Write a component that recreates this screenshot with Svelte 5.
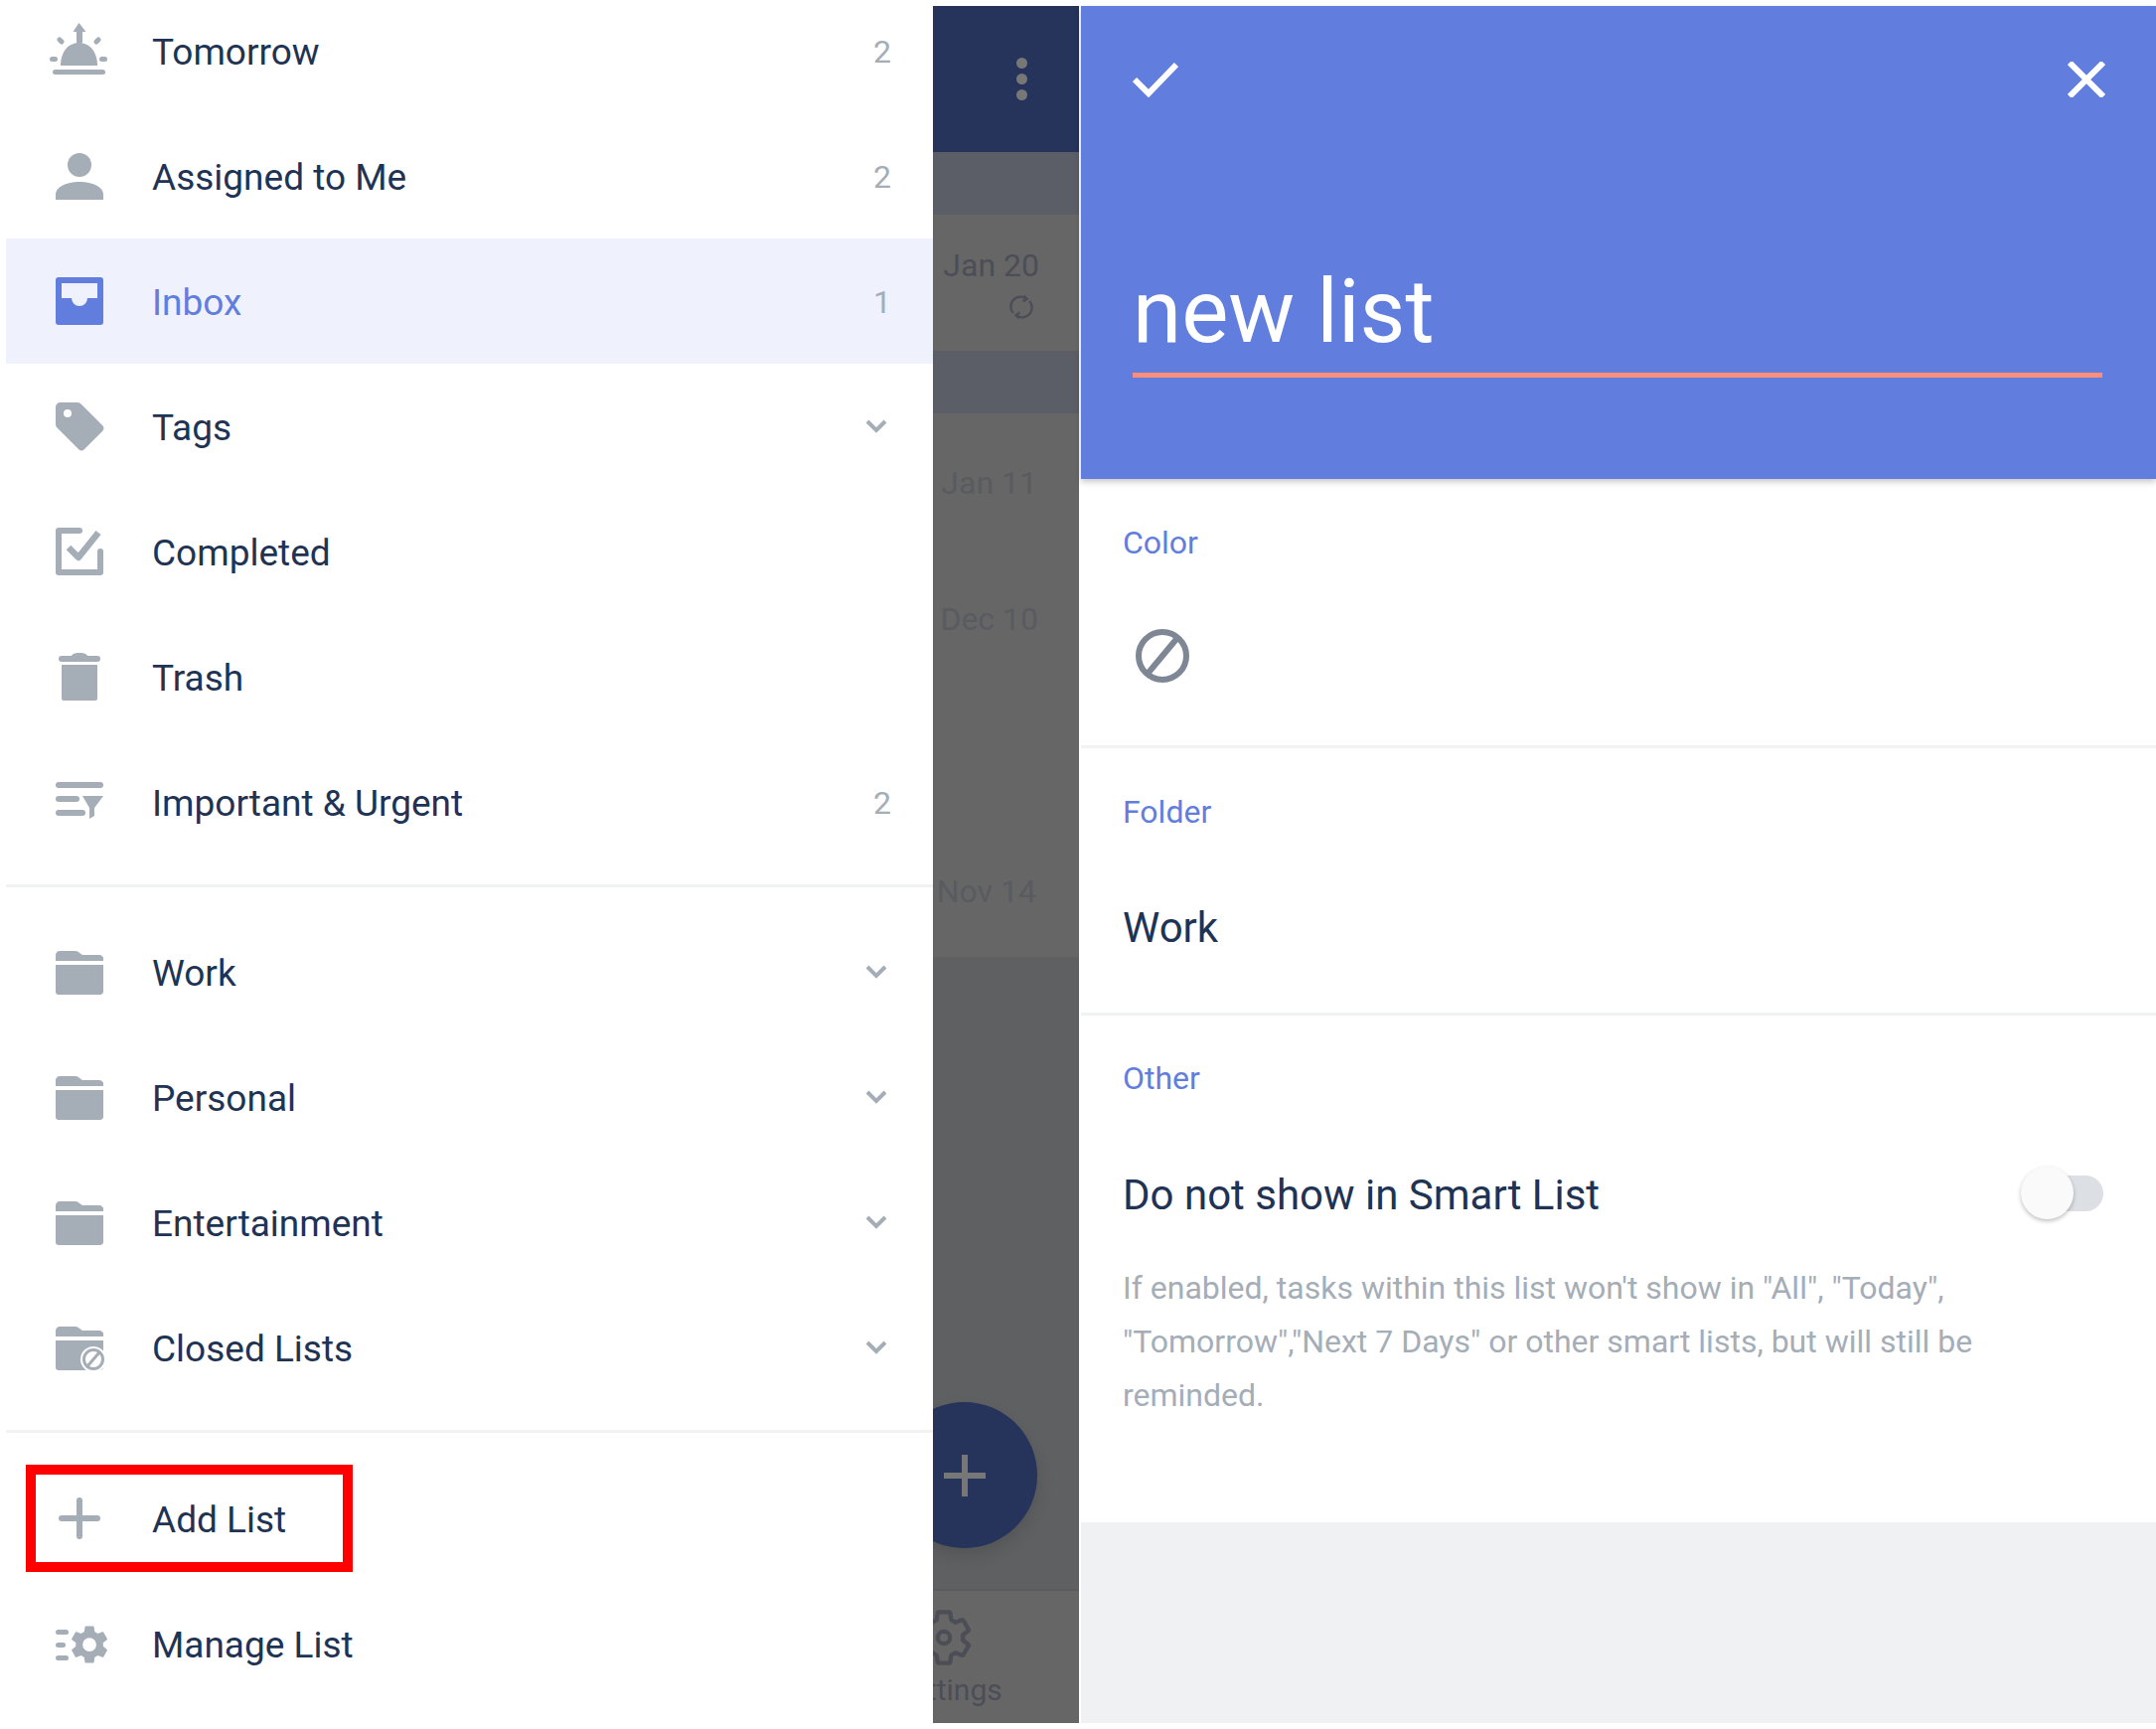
<script>
    const topItems = [
        { label: "Tomorrow", icon: "sun", count: 2 },
        { label: "Assigned to Me", icon: "person", count: 2 },
        { label: "Inbox", icon: "inbox", count: 1, active: true },
        { label: "Tags", icon: "tag", chevron: true },
        { label: "Completed", icon: "done" },
        { label: "Trash", icon: "trash" },
        { label: "Important & Urgent", icon: "filter", count: 2 },
    ];
    const folders = [
        { label: "Work", icon: "folder", chevron: true },
        { label: "Personal", icon: "folder", chevron: true },
        { label: "Entertainment", icon: "folder", chevron: true },
        { label: "Closed Lists", icon: "closed", chevron: true },
    ];
    const dates = [
        { text: "Jan 11", top: 50, right: 42 },
        { text: "Dec 10", top: 97, right: 41 },
        { text: "Nov 14", top: 234, right: 43 },
    ];
    const gear = "M19.14 12.94c.04-.3.06-.61.06-.94 0-.32-.02-.64-.07-.94l2.03-1.58c.18-.14.23-.41.12-.61l-1.92-3.32c-.12-.22-.37-.29-.59-.22l-2.39.96c-.5-.38-1.03-.7-1.62-.94l-.36-2.54c-.04-.24-.24-.41-.48-.41h-3.84c-.24 0-.43.17-.47.41l-.36 2.54c-.59.24-1.13.57-1.62.94l-2.39-.96c-.22-.08-.47 0-.59.22L2.74 8.87c-.12.21-.08.47.12.61l2.03 1.58c-.05.3-.09.63-.09.94s.02.64.07.94l-2.03 1.58c-.18.14-.23.41-.12.61l1.92 3.32c.12.22.37.29.59.22l2.39-.96c.5.38 1.03.7 1.62.94l.36 2.54c.05.24.24.41.48.41h3.84c.24 0 .44-.17.47-.41l.36-2.54c.59-.24 1.13-.56 1.62-.94l2.39.96c.22.08.47 0 .59-.22l1.92-3.32c.12-.22.07-.47-.12-.61l-2.01-1.58z";
</script>

{#snippet icon(name)}
    <svg class="icon" viewBox="0 0 48 48" width="48" height="48">
        {#if name === "sun"}
            <path d="M23.500-4l7 9h-3.500v11h-6V5h-3.500z" />
            <path d="M5 39c0-14 8-23 18.500-23S42 25 42 39z" />
            <rect x="-3" y="43" width="53" height="5" rx="2.500" />
            <rect x="-6" y="30" width="8" height="5" rx="2.500" />
            <rect x="44" y="30" width="8" height="5" rx="2.500" />
            <rect x="1" y="11.500" width="8" height="5" rx="2.500" transform="rotate(45 5 14)" />
            <rect x="38" y="11.500" width="8" height="5" rx="2.500" transform="rotate(-45 42 14)" />
        {:else if name === "person"}
            <circle cx="24" cy="13" r="12" />
            <path d="M0 48v-5c0-8 11-13 24-13s24 5 24 13v5z" />
        {:else if name === "inbox"}
            <path fill="#617ede" fill-rule="evenodd" d="M3 0h42a3 3 0 0 1 3 3v42a3 3 0 0 1-3 3H3a3 3 0 0 1-3-3V3a3 3 0 0 1 3-3zM6 6v15h10a8 8 0 0 0 16 0h10V6z" />
        {:else if name === "tag"}
            <path fill-rule="evenodd" d="M5 0h17c2 0 3 1 4 2l21 21c2 2 2 4 0 6L29 47c-2 2-4 2-6 0L2 26c-1-1-2-2-2-4V5c0-3 2-5 5-5zm7 7a4 4 0 1 0 0 8 4 4 0 0 0 0-8z" />
        {:else if name === "done"}
            <path d="M24 3H3v42h42V24" class="line" stroke-width="6" stroke-linecap="round" stroke-linejoin="round" />
            <path d="M13 20l10 10L43 5" class="line" stroke-width="6.500" stroke-linejoin="round" />
        {:else if name === "trash"}
            <rect x="3" y="3" width="42" height="6" rx="3" />
            <path d="M16 3c1-2 3-3 8-3s7 1 8 3z" />
            <path d="M6 12h36v34a2 2 0 0 1-2 2H8a2 2 0 0 1-2-2z" />
        {:else if name === "filter"}
            <rect x="0" y="4" width="48" height="6" rx="3" />
            <rect x="0" y="18" width="24" height="6" rx="3" />
            <rect x="0" y="32" width="30" height="6" rx="3" />
            <path d="M27 18h21l-9 12v8l-5 3V30z" />
        {:else if name === "folder"}
            <path d="M4 3h16c2 0 3 1 4 2l3 2h17c2 0 4 2 4 3v3H0V7c0-2 2-4 4-4z" />
            <path d="M0 17h48v27c0 2-2 3-3 3H3c-2 0-3-1-3-3z" />
        {:else if name === "closed"}
            <path d="M4 3h16c2 0 3 1 4 2l3 2h17c2 0 4 2 4 3v3H0V7c0-2 2-4 4-4z" />
            <path d="M0 17h48v27c0 2-2 3-3 3H3c-2 0-3-1-3-3z" />
            <circle cx="38" cy="36" r="13" fill="#fff" />
            <circle cx="38" cy="36" r="9.500" class="line" stroke-width="3" />
            <path d="M32 43l12-14" class="line" stroke-width="3" />
        {:else if name === "plus"}
            <rect x="21" y="3" width="6" height="42" rx="3" />
            <rect x="3" y="21" width="42" height="6" rx="3" />
        {:else if name === "gear"}
            <rect x="0" y="10" width="13" height="5" rx="2.500" />
            <rect x="0" y="23" width="10" height="5" rx="2.500" />
            <rect x="0" y="36" width="13" height="5" rx="2.500" />
            <path fill-rule="evenodd" transform="translate(11 2) scale(1.92)" d="{gear}M12 15.600a3.600 3.600 0 1 1 0-7.200 3.600 3.600 0 0 1 0 7.200z" />
        {/if}
    </svg>
{/snippet}

{#snippet row(item)}
    <div class="row" class:active={item.active}>
        {@render icon(item.icon)}
        <span class="label">{item.label}</span>
        {#if item.count}
            <span class="count">{item.count}</span>
        {/if}
        {#if item.chevron}
            <svg class="chevron" viewBox="0 0 22 14" width="22" height="14">
                <path d="M2 2l9 9 9-9" />
            </svg>
        {/if}
    </div>
{/snippet}

<div class="page">
    <aside class="drawer">
        <div class="group first">
            {#each topItems as item}
                {@render row(item)}
            {/each}
        </div>
        <div class="sep"></div>
        <div class="group">
            {#each folders as item}
                {@render row(item)}
            {/each}
        </div>
        <div class="sep second"></div>
        <div class="group">
            <div class="add-box"></div>
            {@render row({ label: "Add List", icon: "plus" })}
            {@render row({ label: "Manage List", icon: "gear" })}
        </div>
    </aside>

    <div class="behind">
        <div class="behind-head">
            <span class="dot"></span><span class="dot"></span><span class="dot"></span>
        </div>
        <div class="bar"></div>
        <div class="task">
            <span class="date">Jan 20</span>
            <svg class="sync" viewBox="0 0 24 24" width="26" height="26">
                <path d="M4.500 17.500A9 9 0 0 1 16.500 4.200M19.500 6.500A9 9 0 0 1 7.500 19.800" />
                <path d="M14 1.500l3 3-3.500 2.500M10 22.500l-3-3 3.500-2.500" />
            </svg>
        </div>
        <div class="bar"></div>
        <div class="tasks">
            {#each dates as d}
                <span class="date faded" style="margin-top: {d.top}px; margin-right: {d.right}px">{d.text}</span>
            {/each}
        </div>
        <div class="empty">
            <div class="fab">
                <svg viewBox="0 0 42 42" width="42" height="42">
                    <path d="M21 0v42M0 21h42" />
                </svg>
            </div>
        </div>
        <div class="nav">
            <svg class="nav-gear" viewBox="0 0 24 24" width="64" height="64">
                <path d={gear} />
                <circle cx="12" cy="12" r="2.300" />
            </svg>
            <span class="nav-label">Settings</span>
        </div>
    </div>

    <main class="editor">
        <header class="editor-head">
            <div class="head-icons">
                <svg viewBox="0 0 46 36" width="46" height="36">
                    <path d="M2 18l14 14L44 3" />
                </svg>
                <svg viewBox="0 0 38 36" width="38" height="36">
                    <path d="M2 1l34 34M36 1L2 35" />
                </svg>
            </div>
            <div class="title">new list</div>
        </header>

        <section class="color-section">
            <h4>Color</h4>
            <svg class="ban" viewBox="0 0 54 54" width="54" height="54">
                <circle cx="27" cy="27" r="24" />
                <path d="M12 45L42 9" />
            </svg>
        </section>

        <section class="folder-section">
            <h4>Folder</h4>
            <div class="value">Work</div>
        </section>

        <section class="other-section">
            <h4>Other</h4>
            <div class="switch-row">
                <div class="value">Do not show in Smart List</div>
                <div class="toggle"><span class="knob"></span></div>
            </div>
            <p class="hint">If enabled, tasks within this list won't show in "All", "Today", "Tomorrow","Next 7 Days" or other smart lists, but will still be reminded.</p>
        </section>

        <div class="editor-foot"></div>
    </main>
</div>

<style>
    :global(body) {
        margin: 0;
        background: #fff;
    }

    .page {
        display: flex;
        width: 2170px;
        height: 1740px;
        box-sizing: border-box;
        padding: 6px 0 6px 6px;
        overflow: hidden;
        font-family: Roboto, "Liberation Sans", sans-serif;
        color: #1f3354;
    }

    .drawer {
        position: relative;
        width: 933px;
        flex: none;
        z-index: 2;
        background: #fff;
    }

    .group {
        position: relative;
    }

    .group.first {
        margin-top: -18px;
    }

    .row {
        display: flex;
        align-items: center;
        height: 126px;
        padding-left: 50px;
        padding-right: 42px;
    }

    .row.active {
        background: #eff1fc;
    }

    .row.active .label {
        color: #617ede;
    }

    .icon {
        flex: none;
        fill: #a5adb7;
        overflow: visible;
    }

    .icon .line {
        fill: none;
        stroke: #a5adb7;
    }

    .label {
        margin-left: 49px;
        padding-top: 3px;
        font-size: 37px;
        flex: 1;
    }

    .count {
        padding-top: 1px;
        font-size: 32px;
        color: #a5adb7;
    }

    .chevron {
        margin-right: 4px;
    }

    .chevron path {
        fill: none;
        stroke: #a5adb7;
        stroke-width: 4;
    }

    .sep {
        height: 3px;
        margin: 20px 0 22px;
        background: #f1f2f3;
    }

    .sep.second {
        margin: 20px 0 23px;
    }

    .add-box {
        position: absolute;
        left: 20px;
        top: 9px;
        width: 329px;
        height: 108px;
        box-sizing: border-box;
        border: 10px solid #ff0000;
    }

    .behind {
        width: 147px;
        flex: none;
        display: flex;
        flex-direction: column;
        overflow: hidden;
        background: #666;
    }

    .behind-head {
        height: 147px;
        flex: none;
        box-sizing: border-box;
        background: #26335a;
        display: flex;
        flex-direction: column;
        align-items: flex-end;
        padding: 52px 52px 0 0;
        gap: 5px;
    }

    .dot {
        width: 11px;
        height: 11px;
        border-radius: 50%;
        background: #777;
    }

    .bar {
        height: 63px;
        flex: none;
        background: #5b5e67;
    }

    .task {
        height: 137px;
        flex: none;
        display: flex;
        flex-direction: column;
        align-items: flex-end;
        padding-right: 40px;
        padding-top: 31px;
        box-sizing: border-box;
    }

    .date {
        font-size: 32px;
        line-height: 40px;
        color: #4b4e57;
    }

    .date.faded {
        color: #595b61;
    }

    .sync {
        margin: 9px 5px 0 0;
    }

    .sync path {
        fill: none;
        stroke: #4b4e57;
        stroke-width: 2.200;
    }

    .tasks {
        height: 547px;
        flex: none;
        display: flex;
        flex-direction: column;
        align-items: flex-end;
    }

    .empty {
        position: relative;
        height: 636px;
        flex: none;
        background: #5f6062;
    }

    .fab {
        position: absolute;
        left: -42px;
        top: 448px;
        width: 147px;
        height: 147px;
        border-radius: 50%;
        background: #26335a;
        box-shadow: 0 8px 16px rgba(0, 0, 0, 0.12);
        display: flex;
        align-items: center;
        justify-content: center;
    }

    .fab path {
        fill: none;
        stroke: #777;
        stroke-width: 6;
    }

    .nav {
        flex: 1;
        border-top: 2px solid #5a5b5d;
        display: flex;
        flex-direction: column;
        align-items: center;
        margin-left: -43px;
        width: calc(100% + 43px);
        padding-right: 74px;
        box-sizing: border-box;
    }

    .nav-gear {
        margin: 15px 8px 0 0;
        flex: none;
    }

    .nav-gear path,
    .nav-gear circle {
        fill: none;
        stroke: #4b4e57;
        stroke-width: 1.600;
        stroke-linejoin: round;
    }

    .nav-label {
        margin-top: 3px;
        font-size: 30px;
        line-height: 36px;
        color: #4b4e57;
    }

    .editor {
        flex: 1;
        margin-left: 2px;
        display: flex;
        flex-direction: column;
        background: #fff;
    }

    .editor-head {
        position: relative;
        height: 476px;
        flex: none;
        box-sizing: border-box;
        background: #617ede;
        padding: 56px 54px 0 52px;
        box-shadow: 0 3px 6px rgba(0, 0, 0, 0.22);
    }

    .head-icons {
        display: flex;
        justify-content: space-between;
        margin-right: -3px;
    }

    .head-icons path {
        fill: none;
        stroke: #fff;
        stroke-width: 6;
    }

    .title {
        margin-top: 161px;
        height: 121px;
        box-sizing: border-box;
        border-bottom: 5px solid #ff8f7a;
        font-size: 89px;
        line-height: 110px;
        color: #fff;
    }

    h4 {
        margin: 0;
        font-size: 32px;
        line-height: 40px;
        font-weight: 400;
        color: #617ede;
    }

    section {
        padding: 0 53px 0 42px;
    }

    .color-section {
        height: 271px;
        box-sizing: border-box;
        padding-top: 44px;
        border-bottom: 3px solid #f1f2f3;
    }

    .ban {
        display: block;
        margin: 67px 0 0 13px;
    }

    .ban circle,
    .ban path {
        fill: none;
        stroke: #7f8795;
        stroke-width: 6;
    }

    .folder-section {
        height: 269px;
        box-sizing: border-box;
        padding-top: 44px;
        border-bottom: 3px solid #f1f2f3;
    }

    .value {
        font-size: 42px;
        line-height: 50px;
    }

    .folder-section .value {
        margin-top: 72px;
    }

    .other-section {
        flex: 1;
        padding-top: 43px;
    }

    .switch-row {
        display: flex;
        align-items: center;
        justify-content: space-between;
        margin-top: 73px;
    }

    .toggle {
        position: relative;
        top: -2px;
        width: 68px;
        height: 36px;
        border-radius: 18px;
        background: #dcdfe4;
    }

    .knob {
        position: absolute;
        left: -15px;
        top: -9px;
        width: 53px;
        height: 53px;
        border-radius: 50%;
        background: #fafafa;
        box-shadow: 0 2px 4px rgba(0, 0, 0, 0.25);
    }

    .hint {
        margin: 41px 0 0;
        width: 900px;
        font-size: 32px;
        line-height: 54px;
        color: #a5adb7;
    }

    .editor-foot {
        height: 202px;
        flex: none;
        background: #f0f1f3;
    }
</style>
